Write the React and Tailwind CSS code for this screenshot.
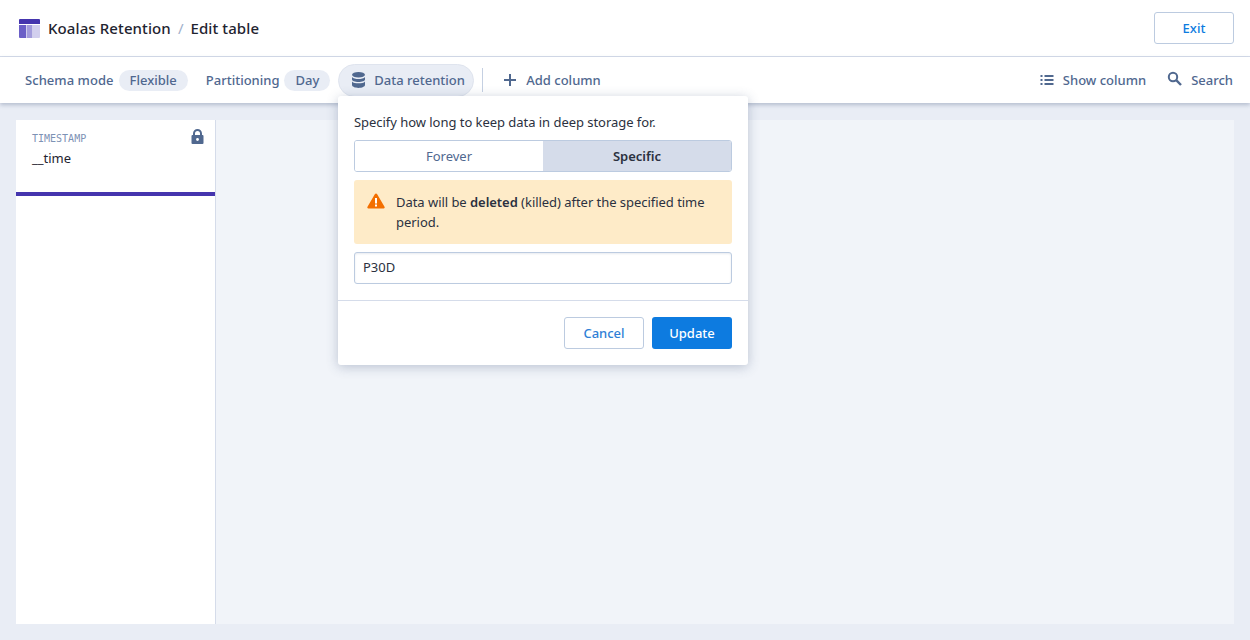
import React from 'react';

const Chip = ({ children }) => (
    <span className="ml-[5px] h-[21px] px-[11px] pt-[2px] rounded-full bg-[#e9edf5] flex items-center text-[#50688f]">{children}</span>
);

const App = () => {
    return (
        <div className="w-full h-screen flex flex-col bg-[#e9edf5] font-['Noto_Sans',sans-serif] text-[13px] overflow-hidden">
            <div className="h-[57px] shrink-0 bg-white border-b border-[#d5dcea] flex items-center pl-[19px] pr-[16px]">
                <svg width="21" height="19" viewBox="0 0 21 19" className="mr-[8px]">
                    <path d="M1 0h19a1 1 0 0 1 1 1v4H0V1a1 1 0 0 1 1-1z" fill="#4535ae" />
                    <path d="M0 6h7v13H1a1 1 0 0 1-1-1z" fill="#6b5fc7" />
                    <rect x="7.5" y="6" width="6" height="13" fill="#a39cdc" />
                    <path d="M14 6h7v12a1 1 0 0 1-1 1h-6z" fill="#d2cfee" />
                </svg>
                <span className="text-[15px] font-medium text-[#1f2430] tracking-[0.1px]">Koalas Retention</span>
                <span className="text-[15px] text-[#9fb0cb] mx-[7px]">/</span>
                <span className="text-[15px] font-medium text-[#1f2430] tracking-[0.1px]">Edit table</span>
                <button className="ml-auto w-[80px] h-[32px] pt-[2px] border border-[#bccbe0] rounded-[3px] bg-white text-[#0d7be0] font-medium">Exit</button>
            </div>
            <div className="h-[46px] shrink-0 bg-white shadow-[0_2px_4px_rgba(60,80,120,0.3)] relative z-10 flex items-center pl-[25px] pr-[17px] text-[#50688f] font-medium">
                <span className="pt-[2px] tracking-[0.05px]">Schema mode</span>
                <Chip>Flexible</Chip>
                <span className="ml-[18px] pt-[2px]">Partitioning</span>
                <Chip>Day</Chip>
                <div className="ml-[8px] h-[33px] w-[136px] rounded-full bg-[#e9edf5] border border-[#dfe4ee] flex items-center pl-[12px]">
                    <svg width="15" height="16" viewBox="0 0 15 16" className="mr-[8px]" fill="#50688f">
                        <ellipse cx="7.5" cy="2.8" rx="6.5" ry="2.8" />
                        <path d="M1 4.9c1 1.4 3.8 2.1 6.5 2.1S13 6.3 14 4.9v2.6C14 9 11 10 7.5 10S1 9 1 7.500z" />
                        <path d="M1 9.400c1 1.400 3.800 1.900 6.500 1.900s5.500-.5 6.500-1.900v3.700C14 14.700 11 16 7.500 16S1 14.700 1 13.100z" />
                    </svg>
                    <span className="pt-[2px]">Data retention</span>
                </div>
                <div className="ml-[8px] w-px h-[24px] bg-[#c5d0e2]" />
                <svg width="14" height="14" viewBox="0 0 14 14" className="ml-[20px] mr-[9px]" fill="#50688f">
                    <rect x="6" y="1" width="2" height="12" />
                    <rect x="1" y="6" width="12" height="2" />
                </svg>
                <span className="pt-[2px]">Add column</span>
                <svg width="14" height="12" viewBox="0 0 14 12" className="ml-auto mr-[9px]" fill="#50688f">
                    <rect x="0.500" y="1" width="2" height="2" />
                    <rect x="0.500" y="5" width="2" height="2" />
                    <rect x="0.500" y="9" width="2" height="2" />
                    <rect x="4.500" y="1" width="9" height="2" />
                    <rect x="4.500" y="5" width="9" height="2" />
                    <rect x="4.500" y="9" width="9" height="2" />
                </svg>
                <span className="pt-[2px]">Show column</span>
                <svg width="15" height="15" viewBox="0 0 15 15" className="ml-[21px] mr-[9px] mb-[3px]" fill="none" stroke="#50688f">
                    <circle cx="6" cy="6" r="4.200" strokeWidth="2" />
                    <path d="M9.200 9.200L14 14" strokeWidth="2.400" />
                </svg>
                <span className="pt-[2px]">Search</span>

                <div className="absolute left-[338px] top-[39px] w-[410px] h-[269px] bg-white rounded-[3px] shadow-[0_2px_12px_rgba(60,80,120,0.3)]">
                    <div className="px-[16px] pt-[17px] font-normal text-[#2b3140]">
                        <div className="leading-[18px] tracking-[-0.04px]">Specify how long to keep data in deep storage for.</div>
                        <div className="mt-[9px] h-[32px] flex rounded-[3px] border border-[#bccbe0] overflow-hidden">
                            <div className="flex-1 pt-[2px] flex items-center justify-center text-[#50688f] bg-white">Forever</div>
                            <div className="flex-1 pt-[2px] flex items-center justify-center bg-[#d5dcea] text-[#2b3140] font-semibold">Specific</div>
                        </div>
                        <div className="mt-[8px] h-[64px] rounded-[3px] bg-[#feebc8] flex pl-[13px] pr-[20px] pt-[12px]">
                            <svg width="18" height="16" viewBox="0 0 18 16" className="shrink-0 mr-[11px] mt-[1px]">
                                <path d="M9 0.500c.5 0 .9.300 1.200.700l7.300 12.600c.5.800 0 1.700-.9 1.700H1.400c-.9 0-1.400-.9-.9-1.700L7.800 1.200C8.100.800 8.500.500 9 .500z" fill="#f36f00" />
                                <rect x="8" y="5" width="2" height="5.500" fill="#fff" />
                                <rect x="8" y="11.500" width="2" height="2" fill="#fff" />
                            </svg>
                            <div className="leading-[20px] tracking-[-0.04px]">Data will be <span className="font-semibold">deleted</span> (killed) after the specified time period.</div>
                        </div>
                        <div className="mt-[8px] h-[32px] rounded-[3px] border border-[#bccbe0] shadow-[inset_0_1px_2px_rgba(60,80,120,0.12)] flex items-center px-[8px]">P30D</div>
                    </div>
                    <div className="mt-[16px] border-t border-[#d5dcea] flex justify-end gap-[8px] px-[16px] pt-[16px]">
                        <button className="w-[80px] h-[32px] pt-[2px] border border-[#bccbe0] rounded-[3px] bg-white text-[#2f7fd6] font-medium">Cancel</button>
                        <button className="w-[80px] h-[32px] pt-[2px] rounded-[3px] bg-[#0d7be0] text-white font-medium">Update</button>
                    </div>
                </div>
            </div>
            <div className="flex-1 min-h-0 px-[16px] pt-[17px] pb-[16px] flex">
                <div className="flex-1 flex bg-[#f1f4f9]">
                    <div className="w-[200px] bg-white border-r border-[#d5dcea]">
                        <div className="h-[76px] px-[16px] pt-[11px] relative border-b-4 border-[#4535ae]">
                            <div className="font-['DejaVu_Sans_Mono',monospace] text-[10px] leading-[16px] text-[#7d92b5]">TIMESTAMP</div>
                            <div className="mt-[2px] leading-[18px] text-[#1f2430]">__time</div>
                            <svg width="13" height="15" viewBox="0 0 13 15" className="absolute right-[11px] top-[9px]">
                                <path d="M3 7V4.500a3.500 3.500 0 0 1 7 0V7" fill="none" stroke="#50688f" strokeWidth="2" />
                                <rect x="0.500" y="6" width="12" height="9" rx="1" fill="#50688f" />
                                <circle cx="6.500" cy="10.500" r="1.400" fill="#fff" />
                            </svg>
                        </div>
                    </div>
                </div>
            </div>
        </div>
    );
};

export default App;
